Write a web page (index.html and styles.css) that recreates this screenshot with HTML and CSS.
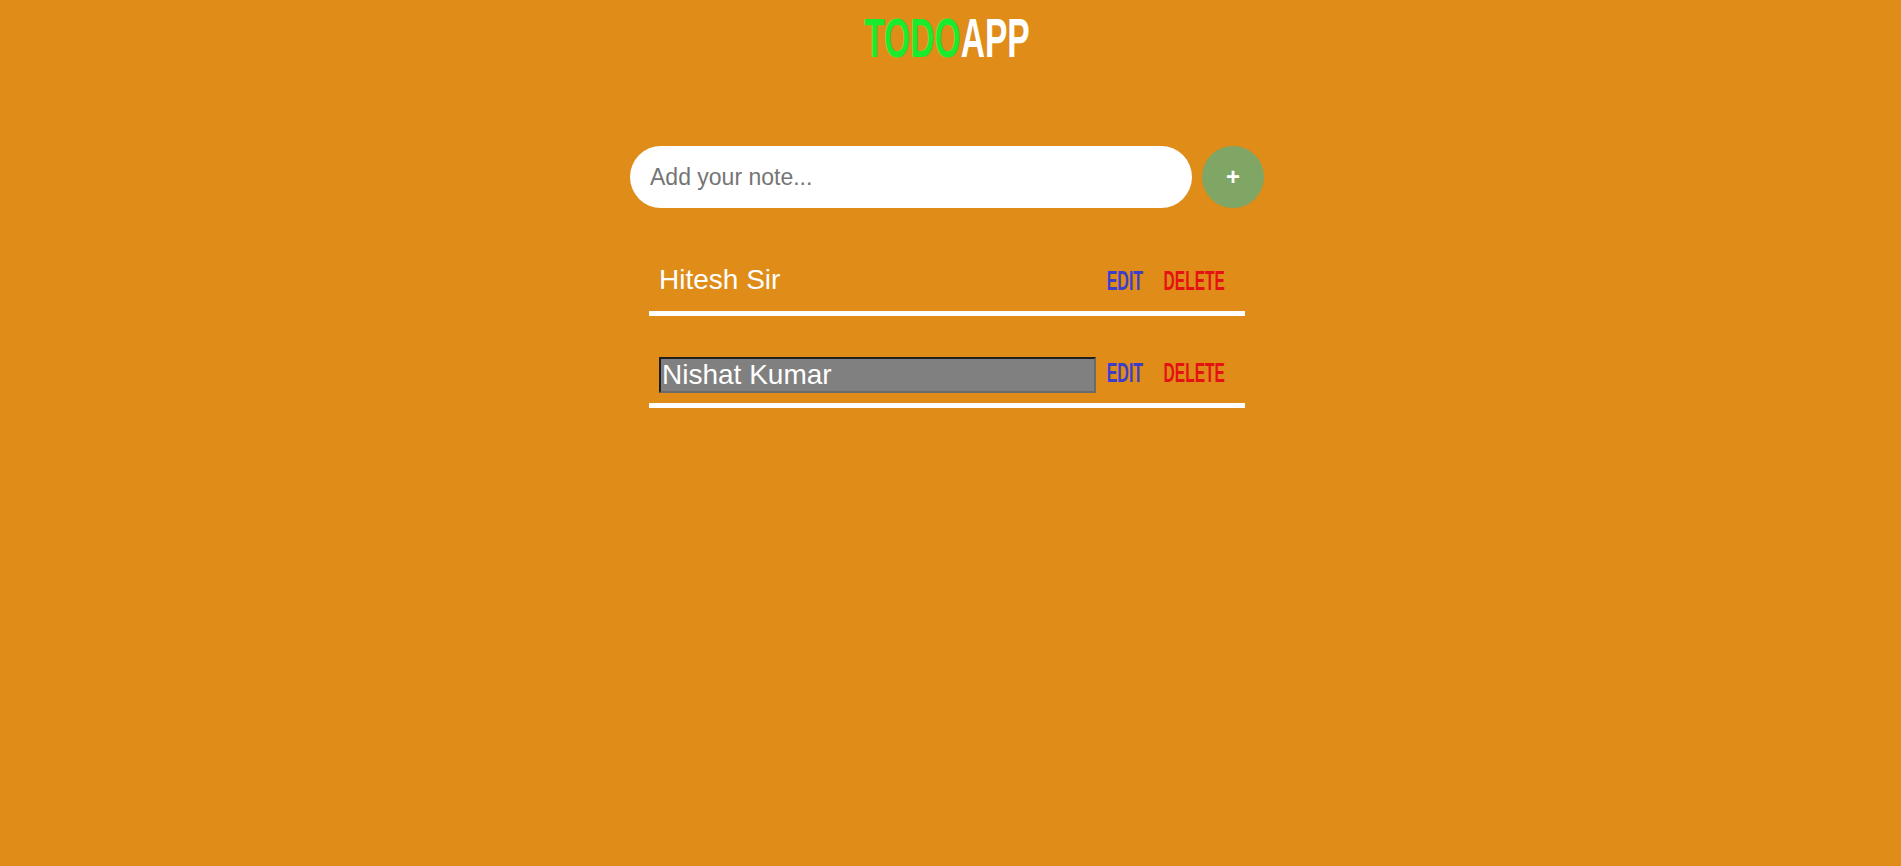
FILE: index.html
```html
<!DOCTYPE html>
<html lang="en">
<head>
<meta charset="utf-8">
<title>TodoApp</title>
<link rel="stylesheet" href="styles.css">
</head>
<body>
<header class="title">
  <span class="title-word"><span class="todo">TODO</span><span class="app">APP</span></span>
</header>
<main class="container">
  <form class="add-form">
    <input class="add-input" type="text" placeholder="Add your note...">
    <button class="add-btn" type="button">+</button>
  </form>
  <ul class="list">
    <li class="item">
      <span class="item-text">Hitesh Sir</span>
      <button class="btn edit" type="button"><span class="btn-label">Edit</span></button>
      <button class="btn delete" type="button"><span class="btn-label">Delete</span></button>
    </li>
    <li class="item">
      <span class="item-text"><input class="edit-input" type="text" value="Nishat Kumar"></span>
      <button class="btn edit" type="button"><span class="btn-label">Edit</span></button>
      <button class="btn delete" type="button"><span class="btn-label">Delete</span></button>
    </li>
  </ul>
</main>
</body>
</html>
```

FILE: styles.css
```css
html, body {
  margin: 0;
  padding: 0;
}
body {
  background: #df8c19;
  font-family: "Liberation Sans", Arial, sans-serif;
  min-height: 866px;
  padding-right: 7px;
  box-sizing: border-box;
}
.title {
  text-align: center;
  padding-top: 10px;
  height: 56px;
  font-size: 56px;
  line-height: 56px;
  font-weight: 700;
}
.title-word {
  display: inline-block;
  transform: scaleX(0.6);
  transform-origin: center;
}
.todo { color: #19ec2f; }
.app { color: #ffffff; }

.container {
  width: 634px;
  margin: 80px auto 0;
}
.add-form {
  display: flex;
  gap: 10px;
  margin: 0;
}
.add-input {
  flex: 1;
  height: 62px;
  box-sizing: border-box;
  border: none;
  border-radius: 31px;
  padding: 0 20px;
  font-family: "Liberation Sans", Arial, sans-serif;
  font-size: 23px;
  background: #ffffff;
  color: #333;
  outline: none;
}
.add-input::placeholder { color: #757575; }
.add-btn {
  width: 62px;
  height: 62px;
  border: none;
  border-radius: 50%;
  background: #7fa665;
  color: #ffffff;
  font-family: "Liberation Sans", Arial, sans-serif;
  font-weight: 700;
  font-size: 24px;
  line-height: 1;
  padding: 0;
}

.list {
  list-style: none;
  width: 596px;
  margin: 41px auto 0;
  padding: 0;
}
.item {
  display: flex;
  align-items: center;
  height: 62px;
  padding: 0 21px 0 10px;
  border-bottom: 5px solid #ffffff;
  margin-bottom: 25px;
}
.item-text {
  flex: 1;
  margin-right: 11px;
  color: #ffffff;
  font-size: 28px;
  display: flex;
}
.edit-input {
  flex: 1;
  width: 100%;
  height: 36px;
  box-sizing: border-box;
  margin-top: 6px;
  padding: 0 1px;
  border: 2px solid;
  border-color: #1f1f1f #6b6b6b #6b6b6b #1f1f1f;
  background: #808080;
  color: #ffffff;
  font-family: "Liberation Sans", Arial, sans-serif;
  font-size: 28px;
  outline: none;
}
.btn {
  display: flex;
  justify-content: center;
  background: none;
  border: none;
  padding: 2px 0 0;
  margin: 0;
  font-family: "Liberation Sans", Arial, sans-serif;
  font-weight: 700;
  font-size: 28px;
  line-height: 28px;
  text-transform: uppercase;
  overflow: visible;
  white-space: nowrap;
}
.btn-label {
  display: inline-block;
  transform: scaleX(0.57);
  transform-origin: center;
}
.edit {
  width: 36px;
  color: #3d3dcc;
  margin-right: 21px;
}
.delete {
  width: 60px;
  color: #e41212;
}
.delete .btn-label { transform: scaleX(0.555); }
```
